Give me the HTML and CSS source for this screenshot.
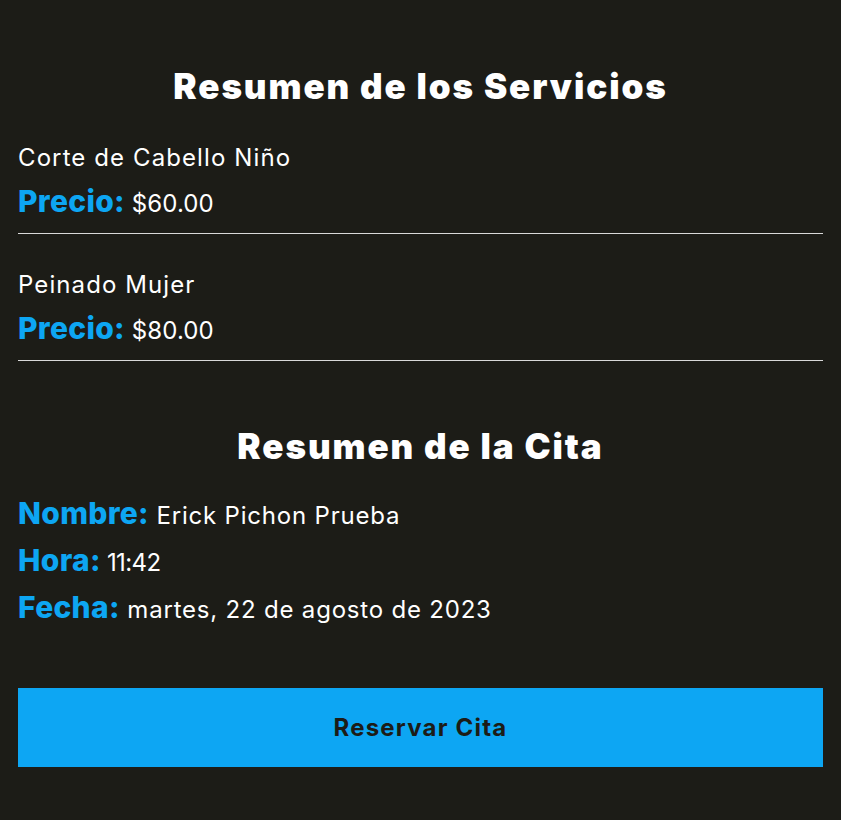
FILE: index.html
```html
<!DOCTYPE html>
<html lang="es">
<head>
<meta charset="utf-8">
<title>Resumen</title>
<link rel="stylesheet" href="styles.css">
</head>
<body>
<div class="resumen">
  <h3 class="titulo titulo-servicios">Resumen de los Servicios</h3>
  <div class="servicio">
    <p class="nombre">Corte de Cabello Niño</p>
    <p class="precio"><span>Precio:</span> $60.00</p>
  </div>
  <div class="servicio">
    <p class="nombre">Peinado Mujer</p>
    <p class="precio"><span>Precio:</span> $80.00</p>
  </div>
  <h3 class="titulo titulo-cita">Resumen de la Cita</h3>
  <div class="datos">
    <p><span>Nombre:</span> Erick Pichon Prueba</p>
    <p class="hora"><span>Hora:</span> 11:42</p>
    <p><span>Fecha:</span> martes, 22 de agosto de 2023</p>
  </div>
  <button class="boton" type="button">Reservar Cita</button>
</div>
</body>
</html>
```
FILE: styles.css
```css
* { box-sizing: border-box; }
html, body { margin: 0; padding: 0; }
body {
  background: #1c1c17;
  color: #ffffff;
  font-family: Inter, "Noto Sans", sans-serif;
  min-height: 820px;
}
.resumen {
  padding: 66px 18px 0;
  display: flex;
  flex-direction: column;
}
.titulo {
  margin: 0;
  text-align: center;
  font-size: 35px;
  line-height: 40px;
  font-weight: 900;
  letter-spacing: 1.9px;
}
.titulo-servicios { margin-bottom: 29px; }
.titulo-cita { margin-top: 65px; margin-bottom: 26px; }
.servicio {
  border-bottom: 1px solid #d9d9d9;
  padding-bottom: 6px;
}
.servicio + .servicio { margin-top: 28px; }
.servicio p, .datos p {
  margin: 0;
  font-size: 24px;
  line-height: 46px;
  font-weight: 400;
  letter-spacing: 0.8px;
}
.servicio .nombre { letter-spacing: 1.1px; }
.servicio .precio { letter-spacing: 0.1px; }
.datos p { line-height: 47px; }
.datos .hora { letter-spacing: -0.6px; }
.servicio span, .datos span {
  color: #0da6f3;
  font-weight: 800;
  font-size: 30px;
  line-height: 1;
  letter-spacing: 0.3px;
}
.boton {
  margin-top: 55px;
  height: 79px;
  width: 100%;
  border: 0;
  background: #0da6f3;
  color: #1c1c17;
  font-family: Inter, "Noto Sans", sans-serif;
  font-size: 24px;
  font-weight: 700;
  letter-spacing: 1.2px;
  cursor: pointer;
}
```
